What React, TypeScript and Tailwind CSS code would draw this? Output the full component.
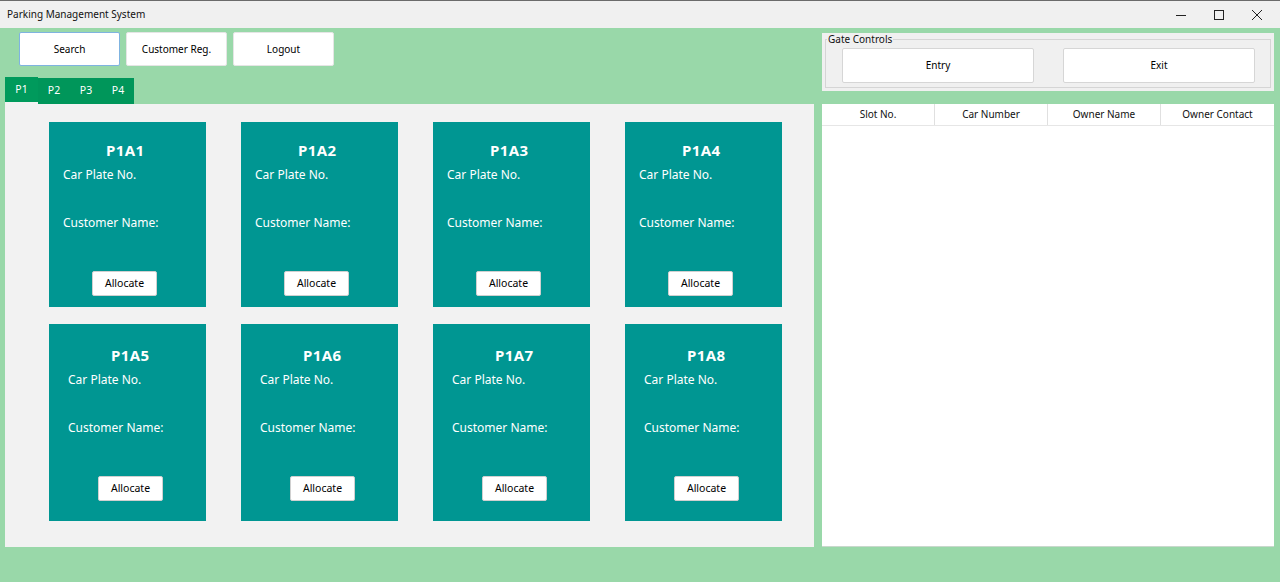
import React from "react";

const font = { fontFamily: '"Noto Sans", "Open Sans", sans-serif' };

type Slot = { id: string; row: number };

const slots: Slot[] = [
  { id: "P1A1", row: 1 },
  { id: "P1A2", row: 1 },
  { id: "P1A3", row: 1 },
  { id: "P1A4", row: 1 },
  { id: "P1A5", row: 2 },
  { id: "P1A6", row: 2 },
  { id: "P1A7", row: 2 },
  { id: "P1A8", row: 2 },
];

function SlotCard({ slot }: { slot: Slot }) {
  const second = slot.row === 2;
  return (
    <div
      className={`w-[157px] bg-[#009692] text-white flex flex-col ${
        second ? "h-[197px]" : "h-[185px]"
      }`}
    >
      <div
        className={`text-[15px] font-bold leading-none tracking-wide ${
          second ? "mt-[24px] pl-[62px]" : "mt-[21px] pl-[57px]"
        }`}
      >
        {slot.id}
      </div>
      <div
        className={`text-[12px] leading-none ${
          second ? "mt-[11px] pl-[19px]" : "mt-[11px] pl-[14px]"
        }`}
      >
        Car Plate No.
      </div>
      <div
        className={`text-[12px] leading-none mt-[36px] ${
          second ? "pl-[19px]" : "pl-[14px]"
        }`}
      >
        Customer Name:
      </div>
      <div className={`mt-[40px] ${second ? "pl-[49px]" : "pl-[43px]"}`}>
        <button className="w-[65px] h-[25px] bg-white text-black text-[10.5px] border border-[#d0d0d0] rounded-[2px]">
          Allocate
        </button>
      </div>
    </div>
  );
}

function TopButton({ label, focused }: { label: string; focused?: boolean }) {
  return (
    <button
      className={`w-[101px] h-[34px] bg-white text-[10px] text-black rounded-[2px] border ${
        focused ? "border-[#7fb3e0]" : "border-[#e5e5e5]"
      }`}
    >
      {label}
    </button>
  );
}

export default function App() {
  const tabs = ["P1", "P2", "P3", "P4"];
  const headers = ["Slot No.", "Car Number", "Owner Name", "Owner Contact"];

  return (
    <div className="w-[1280px] h-[582px] flex flex-col bg-[#99d8a9] overflow-hidden" style={font}>
      {/* title bar */}
      <div className="h-[28px] bg-[#f0f0f0] border-t border-[#6b6b6b] flex items-center shrink-0">
        <span className="pl-[7px] text-[10px] text-[#111]">Parking Management System</span>
        <div className="ml-auto flex items-center h-full">
          <div className="w-[46px] h-full flex items-center justify-center">
            <svg width="10" height="10" viewBox="0 0 10 10">
              <path d="M0 5.5h10" stroke="#222" strokeWidth="1" />
            </svg>
          </div>
          <div className="w-[30px] h-full flex items-center justify-center">
            <svg width="10" height="10" viewBox="0 0 10 10">
              <rect x="0.5" y="0.5" width="9" height="9" fill="none" stroke="#222" strokeWidth="1" />
            </svg>
          </div>
          <div className="w-[46px] h-full flex items-center justify-center">
            <svg width="10" height="10" viewBox="0 0 10 10">
              <path d="M0 0L10 10M10 0L0 10" stroke="#222" strokeWidth="1" />
            </svg>
          </div>
        </div>
      </div>

      <div className="flex flex-1">
        {/* left side */}
        <div className="w-[809px] ml-[5px] flex flex-col">
          <div className="flex gap-[6px] pl-[14px] mt-[4px]">
            <TopButton label="Search" focused />
            <TopButton label="Customer Reg." />
            <TopButton label="Logout" />
          </div>
          <div className="flex mt-[11px] h-[27px] items-end">
            {tabs.map((t, i) => (
              <div
                key={t}
                className={`flex items-center justify-center text-[10.5px] text-white ${
                  i === 0
                    ? "h-[27px] w-[33px] bg-[#009a5c] border-b-2 border-[#f2f2f2]"
                    : "h-[26px] w-[32px] bg-[#00965a]"
                }`}
              >
                {t}
              </div>
            ))}
          </div>
          <div className="h-[443px] bg-[#f2f2f2] pl-[44px] pt-[18px]">
            <div className="flex gap-[35px]">
              {slots
                .filter((s) => s.row === 1)
                .map((s) => (
                  <SlotCard key={s.id} slot={s} />
                ))}
            </div>
            <div className="flex gap-[35px] mt-[17px]">
              {slots
                .filter((s) => s.row === 2)
                .map((s) => (
                  <SlotCard key={s.id} slot={s} />
                ))}
            </div>
          </div>
        </div>

        {/* right side */}
        <div className="w-[452px] ml-[8px] flex flex-col">
          <div className="relative mt-[5px] h-[58px] bg-[#f0f0f0] px-[4px] pt-[7px]">
            <div className="absolute inset-x-[3px] top-[6px] bottom-[3px] border border-[#d5d5d5]" />
            <span className="absolute left-[5px] top-0 px-[1px] bg-[#f0f0f0] text-[10px] leading-[13px] text-[#111]">
              Gate Controls
            </span>
            <div className="relative flex gap-[29px] pl-[16px] pt-[8px]">
              <button className="w-[192px] h-[35px] bg-white text-[10px] text-black border border-[#d6d6d6] rounded-[2px]">
                Entry
              </button>
              <button className="w-[192px] h-[35px] bg-white text-[10px] text-black border border-[#d6d6d6] rounded-[2px]">
                Exit
              </button>
            </div>
          </div>
          <div className="mt-[13px] h-[443px] bg-white border-b border-[#c8d8cc]">
            <div className="grid grid-cols-4 h-[22px] border-b border-[#e6e6e6]">
              {headers.map((h, i) => (
                <div
                  key={h}
                  className={`flex items-center justify-center text-[10px] text-[#111] ${
                    i < 3 ? "border-r border-[#e0e0e0]" : ""
                  }`}
                >
                  {h}
                </div>
              ))}
            </div>
          </div>
        </div>
      </div>
    </div>
  );
}
